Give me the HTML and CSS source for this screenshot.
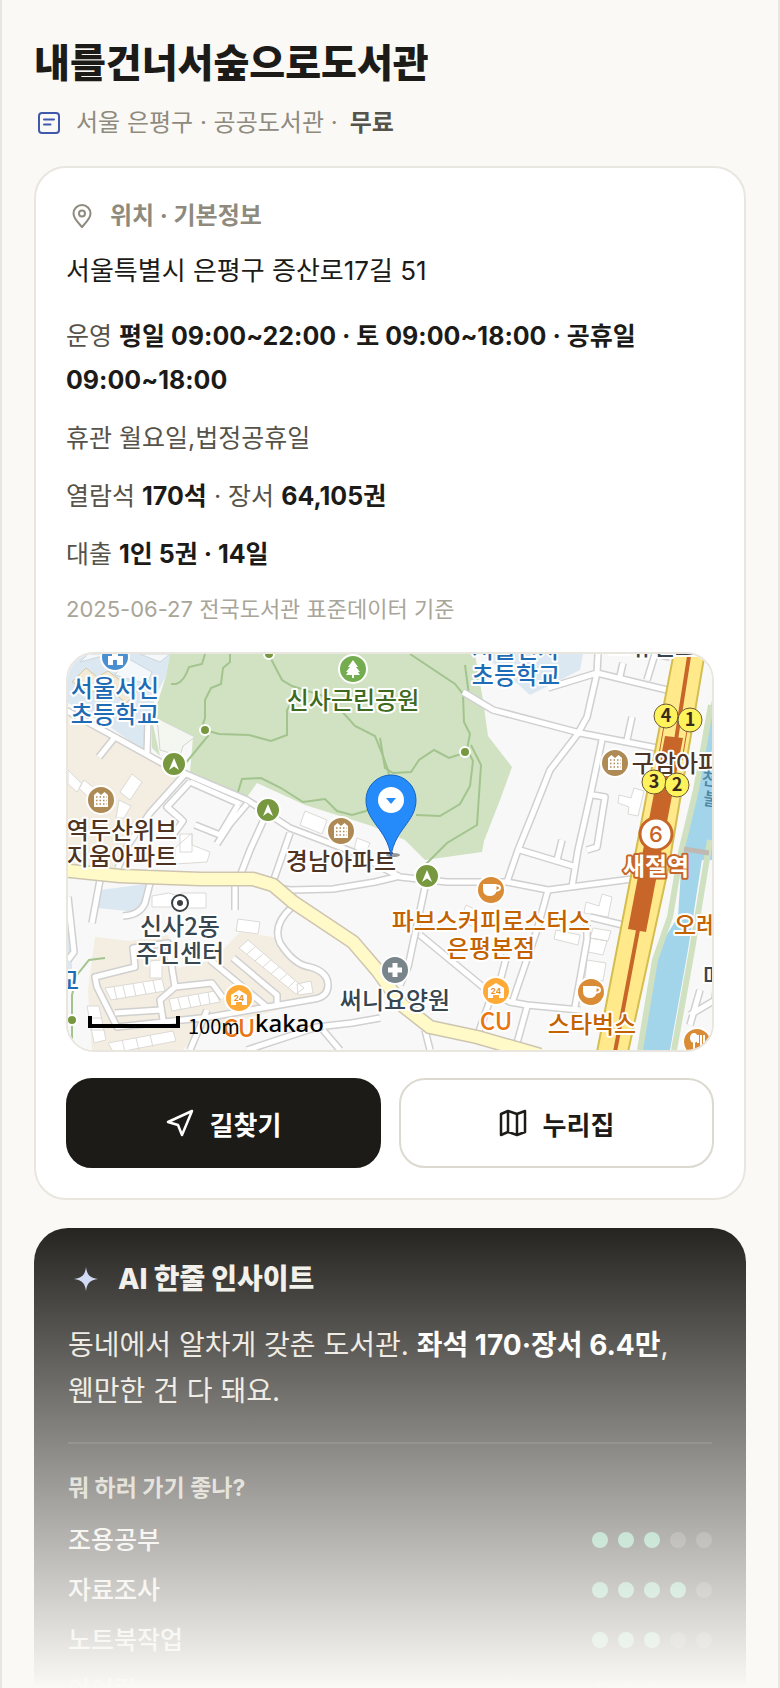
FILE: index.html
```html
<!DOCTYPE html>
<html lang="ko">
<head>
  <meta charset="UTF-8" />
  <meta name="viewport" content="width=device-width, initial-scale=1.0"/>
  <title>내를건너서숲으로도서관</title>
  <link rel="stylesheet" href="styles.css">
</head>
<body>
  <main class="app">
    <header class="place-head">
      <h1>내를건너서숲으로도서관</h1>
      <p class="meta">
        <svg class="meta-icon" viewBox="0 0 24 24" fill="none" stroke="currentColor" stroke-width="2" stroke-linecap="round">
          <rect x="2" y="2" width="20" height="20" rx="3"/>
          <path d="M7 8.500h10M7 13.500h6.500"/>
        </svg>
        <span>서울 은평구 · 공공도서관 ·</span>
        <strong>무료</strong>
      </p>
    </header>

    <section class="card">
      <h2 class="card-title">
        <svg class="pin-icon" viewBox="0 0 24 24" fill="none" stroke="currentColor" stroke-width="2" stroke-linejoin="round">
          <path d="M12 23C8.500 19 3.500 14.500 3.500 9.500a8.500 8.500 0 0 1 17 0C20.500 14.500 15.500 19 12 23z"/>
          <circle cx="12" cy="9.500" r="3"/>
        </svg>
        위치 · 기본정보
      </h2>
      <p class="address">서울특별시 은평구 증산로17길 51</p>
      <div class="facts">
        <p>운영 <b>평일 09:00~22:00 · 토 09:00~18:00 · 공휴일 09:00~18:00</b></p>
        <p>휴관 월요일,법정공휴일</p>
        <p>열람석 <b>170석</b> · 장서 <b>64,105권</b></p>
        <p>대출 <b>1인 5권 · 14일</b></p>
        <p class="source">2025-06-27 전국도서관 표준데이터 기준</p>
      </div>

      <div class="map">
        <svg viewBox="68 654 644 396" preserveAspectRatio="xMidYMid slice" role="img" aria-label="지도">
          <defs>
            <g id="apt">
              <circle r="14" class="halo" fill="#ae8a55"/>
              <path fill="#fff" d="M-7 7V-5l3.500-3 3.500 3 3.500-3L7-5V7z"/>
              <path stroke="#ae8a55" stroke-width="1.500" stroke-dasharray="1.500 2" d="M-5-3H6M-5 0.500H6M-5 4H6"/>
            </g>
            <g id="trail">
              <circle r="12" class="halo" fill="#77983f"/>
              <path fill="#fff" d="M0-6l5 12-5-3.500L-5 6z"/>
            </g>
            <g id="cafe">
              <circle r="14" class="halo" fill="#d98b36"/>
              <path fill="#fff" d="M-8-6H5.500V0Q5 6-1.500 6T-8-1z"/>
              <path fill="none" stroke="#fff" stroke-width="2" d="M5-4.500h1.500q2.500 0 2.500 2.500T4 1"/>
            </g>
            <g id="cvs">
              <circle r="14" class="halo" fill="#ffaa36"/>
              <path fill="#fff" d="M-8 7V-3L0-8l8 5V7H3V4h-6v3z"/>
              <text class="tiny" y="3">24</text>
            </g>
          </defs>

          <rect x="68" y="654" width="644" height="396" fill="#f8f8f8"/>

          <!-- areas -->
          <path fill="#f4ede1" d="M68 713L183 775 133 840 117 868H68zM95 937L130 941 168 935 178 968 213 960 240 932 273 937 293 960 327 973V997L267 1013 200 1030 183 1050H92L88 990z"/>
          <path fill="#dbe8f1" d="M68 654H170L166 676 155 697 143 750 110 727 68 703zM100 890L153 883 137 912 97 908zM480 654H583L580 670 530 695 500 668zM68 920l4 20v30h-4z"/>
          <path fill="#d0e2c1" d="M170 654H475L483 700 488 736 512 767 500 800 484 841 482 852 425 860 405 840 372 826 305 805 257 783 247 797 190 772 193 737 160 720 152 720 166 676z"/>
          <path fill="#d0e2c1" d="M152 720L160 756 152 748z"/>
          <path fill="#f3f7ef" stroke="#d2d6cf" d="M157 718L195 737 183 746 180 756 160 750z"/>
          <path fill="#f2ead8" stroke="#d9c99c" d="M72 682L86 668 97 677 108 671 122 682 137 692 126 703 110 690 90 692z"/>
          <path fill="#f5f8fb" stroke="#cfd5da" d="M80 662l30-8h-22zM115 675l12-17 25 14-5 12zM140 654l20 8 10-8z"/>
          <path fill="#a3d5ea" d="M712 700L697 790 683 840 678 917 657 950 642 1050H670L688 950 705 840 712 790z"/>
          <path fill="#a3d5ea" d="M694 800h18v60h-20z"/>
          <path fill="none" stroke="#cfe1c0" stroke-width="6" d="M711 705L696 790 681 852 670 917 655 960 640 1050M674 1050L692 950 710 840"/>

          <!-- park trails -->
          <g class="trails">
            <path d="M171 684h5q8-2 13-17l13-3 3-10M230 654v8l-7 6-2 16-10 4-6 12v18l-2 6 4 8 1 4-10 12-13 16"/>
            <path d="M205 730l14 4 30 1 22 6 16-6V710l6-10M269 655l13 25 10 6 38 12 25 28 20 10 8 20 5 14 2 10"/>
            <path d="M238 792l4-13 19-1 20 10 22 14 22-3 12 12 15 4 14-4 10-9 10-17M410 654l45 30 8 10 1 28 6 12-3 15 6 12-3 25-10 18-20 12-24-1"/>
            <path d="M465 665l4 30 20 14 18 5M471 745l10 20-4 60-30 18-24 24M380 738l5 30 8 5 18-1 8-12 15-10 15 8 15-5M72 1040V995l5-20 12-15 16-2"/>
          </g>

          <!-- buildings -->
          <g class="buildings">
            <path d="M68 770l14 14-5 8-9-8zM84 780l10 8-7 8-8-8zM120 792l12-18 10 8-12 18zM119 800l12 6-7 12h-8zM305 811l22 9-5 14-22-9zM357 838l13 5-5 12-11-5z"/>
            <path d="M175 848l17-15v12l18 7-3 10-32 2zM152 896l17-3 12 4v10h-29zM181 893h25v15h-25zM238 919l22 3-2 12-22-3zM180 834h12v18h-12z"/>
            <path d="M105 988l57-9 3 12-54 9zM114 987l3 13M123 986l3 12M133 984l3 12M143 983l3 11M153 981l3 12M150 961l12-1v18h-12zM169 999l46-8 5 11-48 9zM178 998l3 12M188 996l3 12M198 994l3 12M208 992l2 12"/>
            <path d="M248 940l56 48-8 6-57-46zM255 947l-8 7M263 954l-8 7M271 960l-8 7M279 967l-8 7M287 974l-8 7M295 981l-7 7M297 984l14-3 2 12-15 2zM87 1006h12l7 34-12 3zM88 1018h14M90 1030h14M108 1043l65-12 3 10-62 12zM122 1040l3 12M136 1038l3 12M150 1035l3 12"/>
            <path d="M619 795l12 3 3-10 10 3-6 25-10-2 1-7-11-4zM586 902l13 4 3-12 10 3-4 20-24-4zM593 928l18 3-3 10-18-3zM590 938l17 3-4 14-15-3zM587 960l19 3-3 18-18-3zM466 905l12 6-4 16-14-6zM556 930l24 5-2 10-24-6z"/>
          </g>

          <!-- streets: casing first, then the white fill -->
          <g class="streets">
            <g id="streets">
              <path d="M62 708L115 737 160 762 186 774 247 800 290 828 353 852 400 877 447 882 507 882 548 890 632 879M115 737l-16 20M148 720l-1 34M185 774L150 813 128 845 118 868M190 782l-23 25 16 14-10 14"/>
              <path d="M190 782l50 22M195 825l25 10 18-30M247 804l-17 20-13 20M265 817L250 850 240 876M290 833L273 882M167 807l14 12M100 880L92 923M150 883l-5 20q-5 12-22 13M235 885v25M68 897l6 55-6 8"/>
              <path d="M292 907q-20 18-12 36 14 22 30 24 18 5 18 18 0 12-14 14L210 1017 117 1027 97 987 95 977 135 967 133 948 168 943 175 987 160 1000 163 1020M175 987L212 983 223 998M115 1013l45-3M210 960L267 1007M233 958L277 995V1003M207 1010L190 1050"/>
              <path d="M247 1050L317 1027 352 1023 380 1018M323 1030L340 1050M273 887l17 3 43-1 42-7 25-6M425 887L408 967 400 985M420 935L483 987 510 1002 527 1005 580 1010M548 890L537 930 513 1000M507 955l-8 30-9 15-13 37M527 1007L517 1043M425 1030l5 20M590 917L623 925M587 925V940L575 1007"/>
              <path d="M463 692L493 710 580 733 657 748M598 654L597 673 587 717 577 735 550 770 533 813 518 850 507 882M548 688L597 673 667 690M655 654L647 680M655 654l15 3M623 663L620 676M632 717L627 740M602 740L590 797 578 850 572 887M593 795l12 2L597 847 587 850M520 850L573 866M562 840l-5 20M690 1015l25-15 2-20M700 990l-10 35"/>
            </g>
          </g>
          <use href="#streets" class="streets-fill"/>

          <g class="avenue">
            <path stroke="#cec5b0" stroke-width="15" d="M60 870L120 876 200 879H253L273 885 293 902 353 942 377 970 402 1005 430 1027 477 1037 540 1055"/>
            <path stroke="#fffac8" stroke-width="12" d="M60 870L120 876 200 879H253L273 885 293 902 353 942 377 970 402 1005 430 1027 477 1037 540 1055"/>
          </g>

          <!-- highway and subway line -->
          <path fill="#ffe98b" stroke="#d4be50" stroke-width="2" d="M674 652H705L669 865 628 1052H597L638 840z"/>
          <path fill="none" stroke="#c76628" stroke-width="4" d="M690 650L676 740M638 930L615 1052"/>
          <path fill="none" stroke="#c76628" stroke-width="1" d="M665 720l-7 40M688 725l-6 35"/>
          <path fill="#c76628" d="M665 736L683 738 646 932 628 929z"/>
          <path stroke="#bfb9b2" stroke-width="5" d="M684 849l25 4"/>

          <!-- path dots and place icons -->
          <g class="halo" fill="#77983f">
            <circle cx="205" cy="730" r="5"/><circle cx="269" cy="654" r="5"/><circle cx="465" cy="752" r="5"/><circle cx="72" cy="1020" r="5"/>
          </g>
          <circle cx="115" cy="657" r="14" class="halo" fill="#4a8fd0"/>
          <path fill="#fff" d="M108 665v-9h4v-4h6v4h5v9h-6v-5h-4v5z"/>
          <circle cx="353" cy="669" r="14" class="halo" fill="#74ad4f"/>
          <path fill="#fff" d="M353 660l5 7h-2l4 5h-2l2 3h-6v3h-2v-3h-6l2-3h-2l4-5h-2z"/>
          <use href="#trail" x="174" y="764"/>
          <use href="#trail" x="268" y="810"/>
          <use href="#trail" x="427" y="876"/>
          <use href="#apt" x="101" y="800"/>
          <use href="#apt" x="341" y="831"/>
          <use href="#apt" x="615" y="763"/>
          <use href="#cafe" x="491" y="890"/>
          <use href="#cafe" x="591" y="992"/>
          <use href="#cvs" x="239" y="998"/>
          <use href="#cvs" x="496" y="991"/>
          <circle cx="395" cy="970" r="14" class="halo" fill="#78868c"/>
          <path stroke="#fff" stroke-width="5" d="M388 970h14M395 963v14"/>
          <circle cx="697" cy="1042" r="14" class="halo" fill="#d98b36"/>
          <path fill="none" stroke="#fff" stroke-width="2" d="M694 1040v12M701 1035v17M704 1035v8M698 1035v8"/>
          <ellipse cx="694" cy="1038" rx="4" ry="5" fill="#fff"/>
          <circle cx="180" cy="903" r="8" fill="#fff" stroke="#3a3f43" stroke-width="2"/>
          <circle cx="180" cy="903" r="3" fill="#3a3f43"/>

          <!-- labels -->
          <g class="label">
            <g fill="#1e6cb5">
              <text x="115" y="697">서울서신</text><text x="115" y="723">초등학교</text>
              <text x="516" y="658">서울신사</text><text x="516" y="684">초등학교</text>
              <text x="68" y="989">교</text>
            </g>
            <text x="353" y="709" fill="#3e6a1e">신사근린공원</text>
            <g fill="#4f3423">
              <text x="122" y="839">역두산위브</text><text x="122" y="865">지움아파트</text>
              <text x="341" y="870">경남아파트</text><text x="687" y="772">구암아파트</text>
            </g>
            <g fill="#37464f">
              <text x="180" y="935">신사2동</text><text x="180" y="962">주민센터</text>
              <text x="395" y="1009">써니요양원</text><text x="653" y="655">그뉴빌트</text>
              <text x="714" y="985">메</text>
            </g>
            <g fill="#c46200">
              <text x="491" y="930">파브스커피로스터스</text><text x="491" y="957">은평본점</text>
              <text x="592" y="1033">스타벅스</text><text x="696" y="934">오레</text>
            </g>
            <g fill="#e8750f">
              <text x="496" y="1030">CU</text><text x="239" y="1037">CU</text>
            </g>
            <g fill="#4e88a5" class="river">
              <text x="710" y="785" transform="rotate(8 706 780)">천</text>
              <text x="712" y="805" transform="rotate(8 706 796)">불</text>
            </g>
          </g>
          <text class="station" x="656" y="875">새절역</text>

          <g class="exits">
            <circle cx="666" cy="716" r="12"/><text x="666" y="722">4</text>
            <circle cx="690" cy="720" r="12"/><text x="690" y="726">1</text>
            <circle cx="654" cy="782" r="12"/><text x="654" y="788">3</text>
            <circle cx="677" cy="785" r="12"/><text x="677" y="791">2</text>
          </g>
          <circle cx="656" cy="834" r="16" fill="#fff" stroke="#c76628" stroke-width="3"/>
          <text class="line-no" x="656" y="842">6</text>

          <!-- current place marker -->
          <ellipse cx="393" cy="855" rx="7" ry="2" fill="#000" opacity=".4"/>
          <path fill="#258bfb" stroke="#1463c5" d="M391 856C387 829 366 822 366 800a25 25 0 0 1 50 0C416 822 395 829 391 856z"/>
          <circle cx="391" cy="800" r="13" fill="#fff"/>
          <path fill="#258bfb" d="M386 798h10l-5 6z"/>

          <!-- scale bar -->
          <path fill="none" stroke="#000" stroke-width="4" d="M90 1016v10h88v-10"/>
          <text class="scale" x="188" y="1034">100m</text>
          <text class="kakao" x="255" y="1032">kakao</text>
        </svg>
      </div>

      <div class="actions">
        <button type="button" class="btn btn-dark">
          <svg viewBox="0 0 28 28" fill="none" stroke="currentColor" stroke-width="2.500" stroke-linejoin="round">
            <path d="M26 2L2 13l10 3 4 10z"/>
          </svg>
          길찾기
        </button>
        <button type="button" class="btn">
          <svg viewBox="0 0 28 28" fill="none" stroke="currentColor" stroke-width="2.500" stroke-linejoin="round">
            <path d="M2 5l7-3 9 3 8-3v21l-8 3-9-3-7 3zM9 2v21M18 5v21"/>
          </svg>
          누리집
        </button>
      </div>
    </section>

    <section class="insight">
      <h2 class="insight-title">
        <svg viewBox="0 0 24 24" fill="#ccd5f3"><path d="M12 0C13 8 16 11 24 12 16 13 13 16 12 24 11 16 8 13 0 12 8 11 11 8 12 0z"/></svg>
        AI 한줄 인사이트
      </h2>
      <p class="insight-text">동네에서 알차게 갖춘 도서관. <b>좌석 170·장서 6.4만</b>, 웬만한 건 다 돼요.</p>
      <div class="scores">
        <h3>뭐 하러 가기 좋나?</h3>
        <div class="score"><span>조용공부</span><span class="dots"><i class="on"></i><i class="on"></i><i class="on"></i><i></i><i></i></span></div>
        <div class="score"><span>자료조사</span><span class="dots"><i class="on"></i><i class="on"></i><i class="on"></i><i class="on"></i><i></i></span></div>
        <div class="score"><span>노트북작업</span><span class="dots"><i class="on"></i><i class="on"></i><i class="on"></i><i></i><i></i></span></div>
        <div class="score"><span>아이랑</span><span class="dots"><i class="on"></i><i class="on"></i><i class="on"></i><i></i><i></i></span></div>
      </div>
    </section>

    <div class="fade"></div>
  </main>
</body>
</html>
```
FILE: styles.css
```css
:root {
  --bg: #faf9f6;
  --ink: #1c1b17;
  --text: #56534a;
  --muted: #8e8a7e;
  --faint: #a9a598;
  --line: #e9e6df;
  --mint: #63bb92;
}
* {
  box-sizing: border-box;
}
body {
  margin: 0;
  background-color: var(--bg);
  color: var(--ink);
  font-family: Inter, "Noto Sans CJK KR", sans-serif;
  word-break: keep-all;
}
h1, h2, h3, p {
  margin: 0;
}
.app {
  position: relative;
  height: 100vh;
  overflow: hidden;
  padding: 36px 32px 0;
  border-left: 2px solid var(--line);
  border-right: 2px solid var(--line);
}
h1 {
  font-size: 39px;
  font-weight: 800;
  line-height: 54px;
}
.meta {
  display: flex;
  align-items: center;
  gap: 12px;
  margin-top: 12px;
  padding-left: 3px;
  color: var(--muted);
  font-size: 24px;
  line-height: 42px;
}
.meta strong {
  color: var(--text);
  font-weight: 700;
}
.meta-icon {
  width: 24px;
  height: 24px;
  margin-right: 3px;
  color: #4059ad;
}

.card {
  margin-top: 22px;
  padding: 30px;
  background-color: #fff;
  border: 2px solid var(--line);
  border-radius: 32px;
}
.card-title {
  display: flex;
  align-items: center;
  gap: 16px;
  padding-left: 4px;
  color: var(--muted);
  font-size: 24px;
  font-weight: 700;
  line-height: 36px;
}
.pin-icon {
  width: 24px;
  height: 24px;
}
.address {
  margin-top: 18px;
  font-size: 26px;
  line-height: 38px;
}
.facts {
  display: flex;
  flex-direction: column;
  gap: 14px;
  margin-top: 24px;
  color: var(--text);
  font-size: 25px;
  line-height: 44px;
}
.facts b {
  color: var(--ink);
  font-weight: 700;
}
.facts .source {
  color: var(--faint);
  font-size: 22px;
  line-height: 38px;
}

.map {
  height: 400px;
  margin-top: 24px;
  overflow: hidden;
  border: 2px solid var(--line);
  border-radius: 28px;
}
.map svg {
  display: block;
  width: 100%;
  height: 100%;
}
.map text {
  font-family: "Noto Sans CJK KR", sans-serif;
}
.halo {
  stroke: #fff;
  stroke-width: 2;
}
.trails {
  fill: none;
  stroke: #a3c48e;
  stroke-width: 2;
}
.buildings {
  fill: #fff;
  stroke: #dcdad6;
}
.streets, .streets-fill, .avenue {
  fill: none;
  stroke-linejoin: round;
}
.streets {
  stroke: #d0d0d0;
  stroke-width: 8;
}
.streets-fill {
  stroke: #fff;
  stroke-width: 5;
}
.label text {
  font-size: 24px;
  font-weight: 500;
  text-anchor: middle;
  paint-order: stroke;
  stroke: #fff;
  stroke-width: 4;
  stroke-linejoin: round;
}
.label .river text {
  font-size: 18px;
  stroke: none;
}
.map .tiny {
  font-family: Inter, sans-serif;
  font-size: 8px;
  font-weight: 700;
  text-anchor: middle;
  fill: #e8901c;
}
.station {
  font-size: 24px;
  font-weight: 700;
  text-anchor: middle;
  fill: #fff;
  paint-order: stroke;
  stroke: #c76628;
  stroke-width: 4;
  stroke-linejoin: round;
}
.exits circle {
  fill: #fff35c;
  stroke: #6b5838;
}
.exits text {
  font-size: 18px;
  font-weight: 700;
  text-anchor: middle;
  fill: #3a2c1c;
}
.map .line-no {
  font-family: Inter, sans-serif;
  font-size: 22px;
  font-weight: 500;
  text-anchor: middle;
  fill: #c76628;
}
.map .scale {
  font-family: "Noto Sans CJK KR", sans-serif;
  font-size: 20px;
}
.map .kakao {
  font-family: "Noto Sans", sans-serif;
  font-size: 24px;
  font-weight: 500;
}

.actions {
  display: grid;
  grid-template-columns: 1fr 1fr;
  gap: 18px;
  margin-top: 26px;
}
.btn {
  display: flex;
  align-items: center;
  justify-content: center;
  gap: 16px;
  height: 90px;
  background-color: #fff;
  color: var(--ink);
  border: 2px solid #dcd9d0;
  border-radius: 26px;
  font-family: inherit;
  font-size: 26px;
  font-weight: 700;
  cursor: pointer;
}
.btn svg {
  width: 28px;
  height: 28px;
}
.btn-dark {
  background-color: var(--ink);
  border-color: var(--ink);
  color: #fff;
}

.insight {
  margin-top: 28px;
  padding: 30px 34px;
  background-color: var(--ink);
  border-radius: 34px;
  color: #f1efe9;
}
.insight-title {
  display: flex;
  align-items: center;
  gap: 20px;
  padding-left: 6px;
  font-size: 28px;
  font-weight: 800;
  line-height: 42px;
}
.insight-title svg {
  width: 24px;
  height: 24px;
}
.insight-text {
  margin-top: 22px;
  font-size: 28px;
  line-height: 46px;
  color: #e9e6dd;
}
.insight-text b {
  color: #fff;
}
.scores {
  margin-top: 28px;
  padding-top: 26px;
  border-top: 2px solid #35342f;
}
.scores h3 {
  font-size: 23px;
  font-weight: 700;
  line-height: 36px;
  color: #c9c5b8;
}
.score {
  display: flex;
  align-items: center;
  justify-content: space-between;
  margin-top: 14px;
  font-size: 25px;
  font-weight: 500;
  line-height: 36px;
}
.scores h3 + .score {
  margin-top: 16px;
}
.dots {
  display: flex;
  gap: 10px;
}
.dots i {
  width: 16px;
  height: 16px;
  border-radius: 50%;
  background-color: #45443f;
}
.dots .on {
  background-color: var(--mint);
}

.fade {
  position: absolute;
  right: -2px;
  bottom: 0;
  left: -2px;
  height: 480px;
  background: linear-gradient(rgba(250, 249, 246, 0), var(--bg));
  pointer-events: none;
}
```
